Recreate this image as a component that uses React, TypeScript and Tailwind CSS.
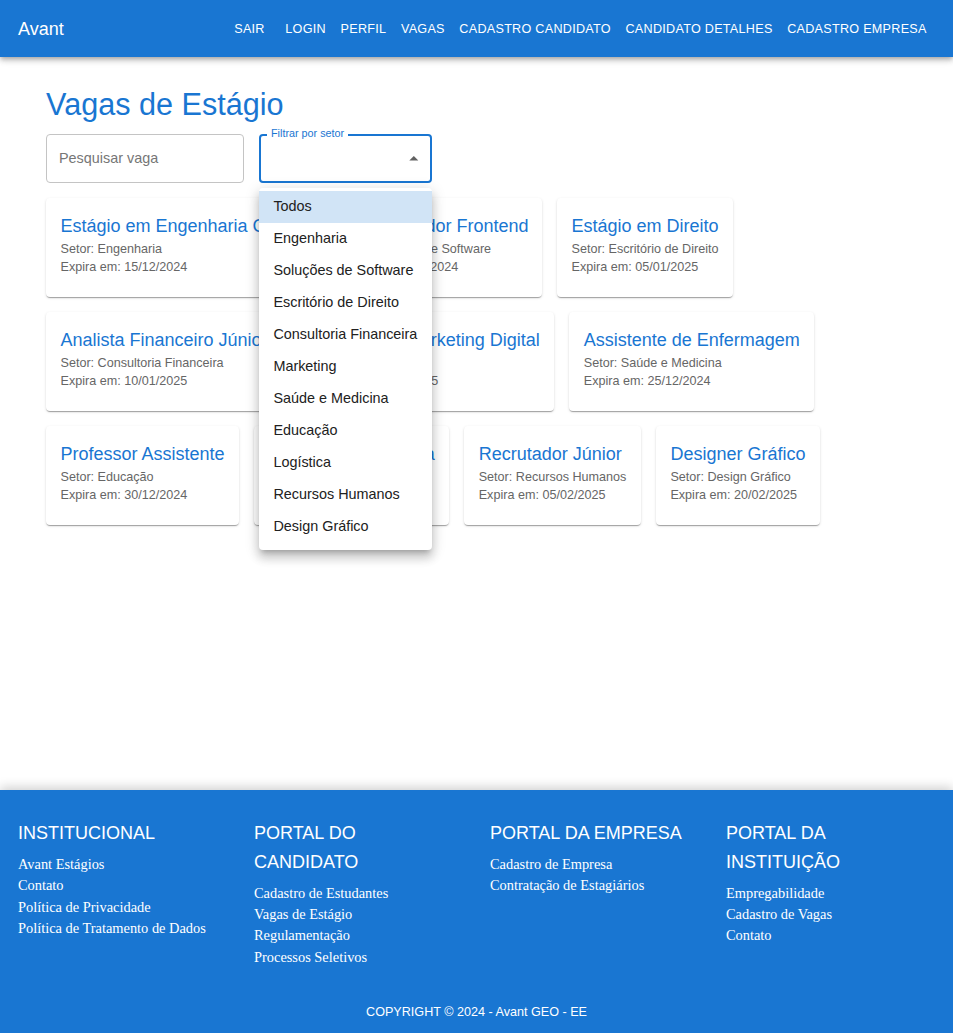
import React from 'react';

const navItems = ['SAIR', 'LOGIN', 'PERFIL', 'VAGAS', 'CADASTRO CANDIDATO', 'CANDIDATO DETALHES', 'CADASTRO EMPRESA'];

const setores = [
  'Todos',
  'Engenharia',
  'Soluções de Software',
  'Escritório de Direito',
  'Consultoria Financeira',
  'Marketing',
  'Saúde e Medicina',
  'Educação',
  'Logística',
  'Recursos Humanos',
  'Design Gráfico',
];

const vagas = [
  { titulo: 'Estágio em Engenharia Civil', setor: 'Engenharia', expira: '15/12/2024', w: 'w-[256px]' },
  { titulo: 'Desenvolvedor Frontend', setor: 'Soluções de Software', expira: '20/12/2024', w: 'w-[225px]' },
  { titulo: 'Estágio em Direito', setor: 'Escritório de Direito', expira: '05/01/2025', w: '' },
  { titulo: 'Analista Financeiro Júnior', setor: 'Consultoria Financeira', expira: '10/01/2025', w: '' },
  { titulo: 'Analista de Marketing Digital', setor: 'Marketing', expira: '15/01/2025', w: '' },
  { titulo: 'Assistente de Enfermagem', setor: 'Saúde e Medicina', expira: '25/12/2024', w: '' },
  { titulo: 'Professor Assistente', setor: 'Educação', expira: '30/12/2024', w: '' },
  { titulo: 'Analista de Logística', setor: 'Logística', expira: '28/01/2025', w: '' },
  { titulo: 'Recrutador Júnior', setor: 'Recursos Humanos', expira: '05/02/2025', w: '' },
  { titulo: 'Designer Gráfico', setor: 'Design Gráfico', expira: '20/02/2025', w: '' },
];

const footerCols = [
  { titulo: ['INSTITUCIONAL'], links: ['Avant Estágios', 'Contato', 'Política de Privacidade', 'Política de Tratamento de Dados'] },
  { titulo: ['PORTAL DO', 'CANDIDATO'], links: ['Cadastro de Estudantes', 'Vagas de Estágio', 'Regulamentação', 'Processos Seletivos'] },
  { titulo: ['PORTAL DA EMPRESA'], links: ['Cadastro de Empresa', 'Contratação de Estagiários'] },
  { titulo: ['PORTAL DA', 'INSTITUIÇÃO'], links: ['Empregabilidade', 'Cadastro de Vagas', 'Contato'] },
];

export default function App() {
  return (
    <div className="min-h-screen flex flex-col bg-white font-['Liberation_Sans',Arial,sans-serif]">
      {/* Header */}
      <header className="relative z-20 h-[57px] bg-[#1976d2] text-white flex items-center justify-between pl-[18px] pr-[19px] shadow-[0_2px_4px_-1px_rgba(0,0,0,0.2),0_4px_5px_0_rgba(0,0,0,0.14),0_1px_10px_0_rgba(0,0,0,0.12)]">
        <div className="text-[18px] leading-[28px]">Avant</div>
        <nav className="flex items-center">
          {navItems.map((item, i) => (
            <button
              key={item}
              className={`px-[7.3px] py-[5px] text-[12.6px] leading-[22px] tracking-[0.28px] text-white ${i === 0 ? 'mr-[6px]' : ''}`}
            >
              {item}
            </button>
          ))}
        </nav>
      </header>

      {/* Conteúdo */}
      <main className="flex-1 px-[46px] pt-[29px]">
        <h1 className="text-[30.6px] leading-[37.8px] text-[#1976d2]">Vagas de Estágio</h1>

        <div className="mt-[10px] flex items-start gap-[15px]">
          <input
            readOnly
            placeholder="Pesquisar vaga"
            className="w-[198px] h-[49px] rounded-[4px] border border-[#c4c4c4] px-[12px] text-[14.4px] text-[#212121] placeholder:text-[#767676] outline-none"
          />

          <div className="relative w-[173px] h-[49px] rounded-[4px] border-2 border-[#1976d2]">
            <span className="absolute left-[6px] top-[-10px] px-[4px] bg-white text-[10.8px] leading-[14px] text-[#1976d2]">
              Filtrar por setor
            </span>
            <svg className="absolute right-[5px] top-[12px] w-[21.6px] h-[21.6px]" viewBox="0 0 24 24" fill="#616161">
              <path d="M7 14l5-5 5 5z" />
            </svg>

            {/* Menu aberto */}
            <ul className="absolute z-30 left-[-2px] top-[52px] w-[173px] bg-white rounded-[4px] pt-[3px] pb-[7px] shadow-[0_5px_5px_-3px_rgba(0,0,0,0.2),0_8px_10px_1px_rgba(0,0,0,0.14),0_3px_14px_2px_rgba(0,0,0,0.12)]">
              {setores.map((s, i) => (
                <li
                  key={s}
                  className={`h-[32px] flex items-center pt-[1px] px-[14.4px] text-[14.4px] text-[#212121] ${i === 0 ? 'bg-[#d1e4f6]' : ''}`}
                >
                  {s}
                </li>
              ))}
            </ul>
          </div>
        </div>

        <div className="mt-[15px] flex flex-wrap gap-x-[15px] gap-y-[15px]">
          {vagas.map(v => (
            <div
              key={v.titulo}
              className={`${v.w} bg-white rounded-[4px] px-[14.5px] pt-[14px] pb-[21px] shadow-[0_2px_1px_-1px_rgba(0,0,0,0.2),0_1px_1px_0_rgba(0,0,0,0.14),0_1px_3px_0_rgba(0,0,0,0.12)]`}
            >
              <div className="text-[18px] leading-[28px] text-[#1976d2] whitespace-nowrap">{v.titulo}</div>
              <div className="text-[12.6px] leading-[18px] text-[#666666] whitespace-nowrap">Setor: {v.setor}</div>
              <div className="text-[12.6px] leading-[18px] text-[#666666] whitespace-nowrap">Expira em: {v.expira}</div>
            </div>
          ))}
        </div>
      </main>

      {/* Rodapé */}
      <footer className="relative z-10 bg-[#1976d2] text-white pt-[29px] pb-[12px] shadow-[0_-3px_10px_rgba(0,0,0,0.18)]">
        <div className="pl-[18px] grid grid-cols-[236px_236px_236px_236px]">
          {footerCols.map(col => (
            <div key={col.titulo.join(' ')}>
              <h3 className="text-[18px] leading-[28.8px]">
                {col.titulo.map(t => (
                  <div key={t}>{t}</div>
                ))}
              </h3>
              <ul className="mt-[6px] font-['Liberation_Serif','Times_New_Roman',serif] text-[14.4px] leading-[21.3px]">
                {col.links.map(l => (
                  <li key={l}>{l}</li>
                ))}
              </ul>
            </div>
          ))}
        </div>
        <div className="mt-[35px] text-center text-[12.6px] leading-[18px]">COPYRIGHT © 2024 - Avant GEO - EE</div>
      </footer>
    </div>
  );
}
